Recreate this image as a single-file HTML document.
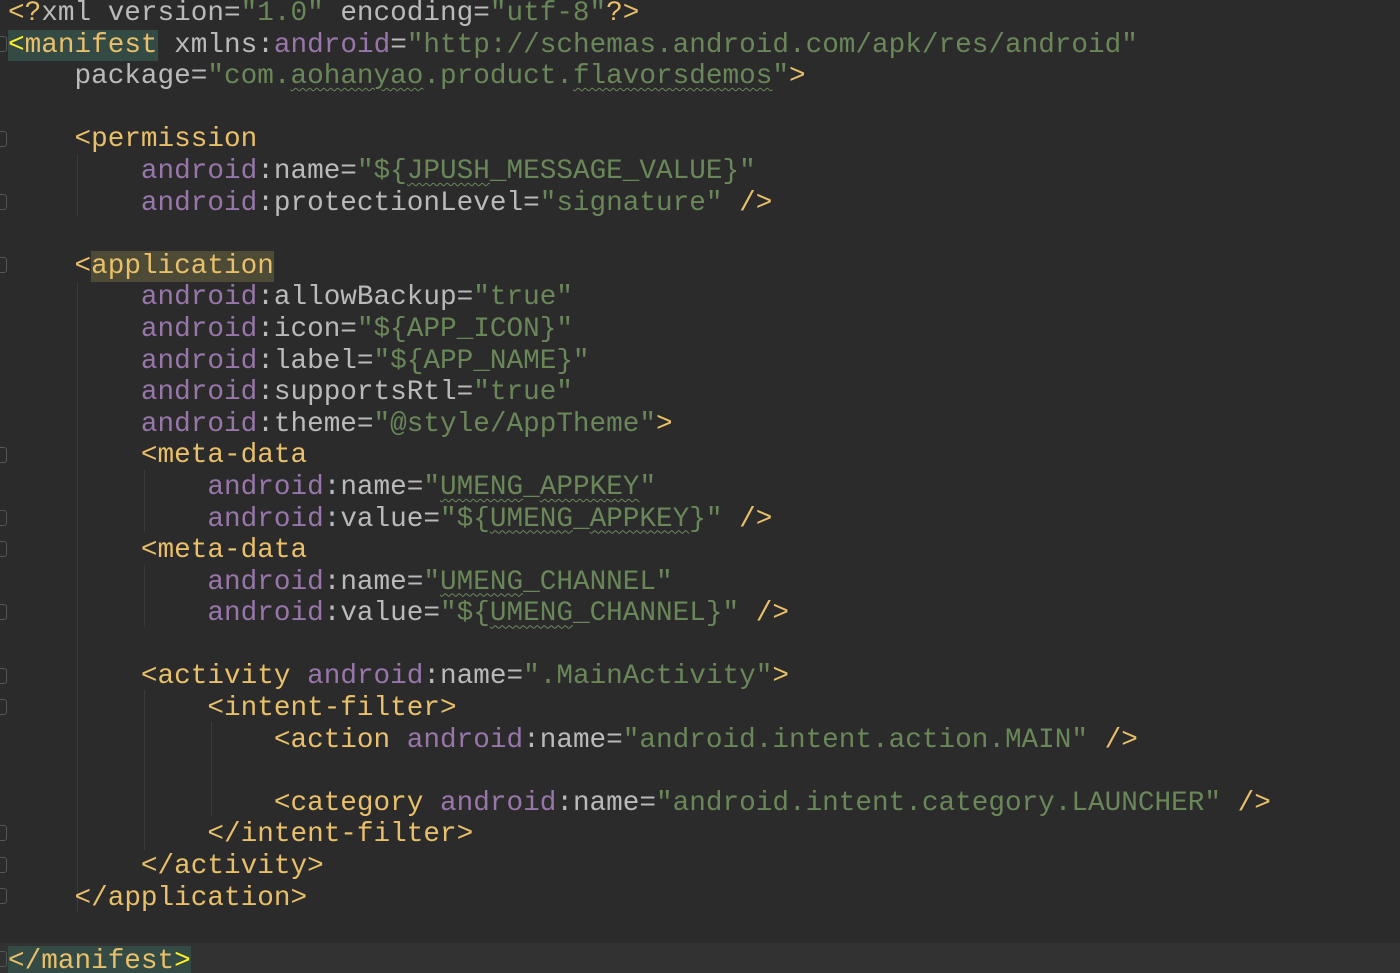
<!DOCTYPE html>
<html><head><meta charset="utf-8"><style>
html,body{margin:0;padding:0;background:#2b2b2b;width:1400px;height:973px;overflow:hidden;position:relative}
pre{position:absolute;left:8px;top:-2px;margin:0;font-family:"Liberation Mono",monospace;font-size:27.7px;line-height:31.6px;color:#bababa;white-space:pre}
.t{color:#e8bf6a}.n{color:#9876aa}.v{color:#6a8759}.a{color:#bababa}
.w{text-decoration:underline wavy #6a8759;text-decoration-thickness:1px;text-underline-offset:4px}
.hm{background:#344a44}.ha{background:#4d4a35}
.y{color:#ffef28}
.cur{position:absolute;left:0;top:943px;width:1400px;height:30px;background:#323232}
.g{position:absolute;width:1px;background:#3a3a3a}
.f{position:absolute;left:0;width:6px;height:14px;border:1px solid #555;border-left:none;border-radius:0 3px 3px 0}
</style></head><body>
<div class="cur"></div>
<div class="g" style="left:77px;top:154px;height:62px"></div>
<div class="g" style="left:77px;top:282px;height:630px"></div>
<div class="g" style="left:144px;top:470px;height:62px"></div>
<div class="g" style="left:144px;top:565px;height:62px"></div>
<div class="g" style="left:144px;top:690px;height:160px"></div>
<div class="g" style="left:211px;top:722px;height:95px"></div>
<div class="f" style="top:36px"></div><div class="f" style="top:131px"></div><div class="f" style="top:194px"></div><div class="f" style="top:257px"></div><div class="f" style="top:447px"></div><div class="f" style="top:510px"></div><div class="f" style="top:541px"></div><div class="f" style="top:604px"></div><div class="f" style="top:668px"></div><div class="f" style="top:699px"></div><div class="f" style="top:825px"></div><div class="f" style="top:857px"></div><div class="f" style="top:888px"></div><div class="f" style="top:951px"></div>
<pre><span class="t">&lt;?</span><span class="a">xml version=</span><span class="v">"1.0"</span><span class="a"> encoding=</span><span class="v">"utf-8"</span><span class="t">?&gt;</span>
<span class="hm"><span class="y">&lt;</span><span class="t">manifest</span></span> <span class="a">xmlns:</span><span class="n">android</span>=<span class="v">"http://schemas.android.com/apk/res/android"</span>
    package=<span class="v">"com.<span class="w">aohanyao</span>.product.<span class="w">flavorsdemos</span>"</span><span class="t">&gt;</span>

    <span class="t">&lt;permission</span>
        <span class="n">android</span>:name=<span class="v">"${<span class="w">JPUSH</span>_MESSAGE_VALUE}"</span>
        <span class="n">android</span>:protectionLevel=<span class="v">"signature"</span> <span class="t">/&gt;</span>

    <span class="t">&lt;<span class="ha">application</span></span>
        <span class="n">android</span>:allowBackup=<span class="v">"true"</span>
        <span class="n">android</span>:icon=<span class="v">"${APP_ICON}"</span>
        <span class="n">android</span>:label=<span class="v">"${APP_NAME}"</span>
        <span class="n">android</span>:supportsRtl=<span class="v">"true"</span>
        <span class="n">android</span>:theme=<span class="v">"@style/AppTheme"</span><span class="t">&gt;</span>
        <span class="t">&lt;meta-data</span>
            <span class="n">android</span>:name=<span class="v">"<span class="w">UMENG</span>_<span class="w">APPKEY</span>"</span>
            <span class="n">android</span>:value=<span class="v">"${<span class="w">UMENG</span>_<span class="w">APPKEY</span>}"</span> <span class="t">/&gt;</span>
        <span class="t">&lt;meta-data</span>
            <span class="n">android</span>:name=<span class="v">"<span class="w">UMENG</span>_CHANNEL"</span>
            <span class="n">android</span>:value=<span class="v">"${<span class="w">UMENG</span>_CHANNEL}"</span> <span class="t">/&gt;</span>

        <span class="t">&lt;activity</span> <span class="n">android</span>:name=<span class="v">".MainActivity"</span><span class="t">&gt;</span>
            <span class="t">&lt;intent-filter&gt;</span>
                <span class="t">&lt;action</span> <span class="n">android</span>:name=<span class="v">"android.intent.action.MAIN"</span> <span class="t">/&gt;</span>

                <span class="t">&lt;category</span> <span class="n">android</span>:name=<span class="v">"android.intent.category.LAUNCHER"</span> <span class="t">/&gt;</span>
            <span class="t">&lt;/intent-filter&gt;</span>
        <span class="t">&lt;/activity&gt;</span>
    <span class="t">&lt;/application&gt;</span>

<span class="hm"><span class="t">&lt;/manifest</span><span class="y">&gt;</span></span></pre>
</body></html>
